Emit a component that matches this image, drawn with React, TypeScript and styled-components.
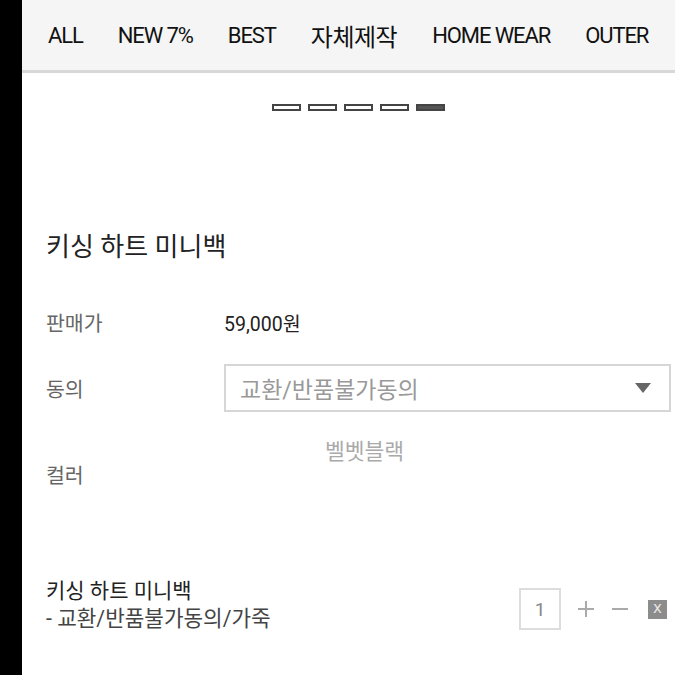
import styled, { createGlobalStyle } from "styled-components";

const GlobalStyle = createGlobalStyle`
  html, body {
    margin: 0;
    padding: 0;
    background: #fff;
    font-family: Roboto, "Noto Sans CJK KR", sans-serif;
    overflow: hidden;
  }
`;

const Shell = styled.div`
  display: flex;
  width: 675px;
  height: 675px;
`;

const SideBar = styled.div`
  width: 22px;
  flex: none;
  background: #000;
`;

const Main = styled.div`
  flex: 1;
  min-width: 0;
`;

const Nav = styled.nav`
  display: flex;
  align-items: center;
  gap: 35px;
  height: 70px;
  padding-left: 26px;
  background: #f5f5f5;
  border-bottom: 3px solid #d8d8d8;
  white-space: nowrap;
  overflow: hidden;
`;

const NavItem = styled.a<{ $ko?: boolean }>`
  font-size: ${({ $ko }) => ($ko ? 24 : 22)}px;
  letter-spacing: ${({ $ko }) => ($ko ? -0.5 : -1.1)}px;
  color: #111;
  text-decoration: none;
`;

const Dots = styled.div`
  display: flex;
  justify-content: center;
  gap: 7px;
  margin-top: 31px;
  padding-left: 20px;
`;

const Dot = styled.span<{ $active?: boolean }>`
  box-sizing: border-box;
  width: 29px;
  height: 7px;
  border: 2px solid #444;
  background: ${({ $active }) => ($active ? "#555" : "#fff")};
`;

const Product = styled.section`
  padding: 0 8px 0 24px;
`;

const Title = styled.h1`
  margin: 119px 0 34px;
  font-size: 26px;
  line-height: 34px;
  font-weight: 400;
  color: #222;
`;

const InfoRow = styled.div<{ $gap?: number }>`
  display: grid;
  grid-template-columns: 178px 1fr;
  align-items: center;
  min-height: 48px;
  margin-bottom: ${({ $gap }) => $gap ?? 0}px;
`;

const Label = styled.span`
  font-size: 20.5px;
  color: #666;
`;

const Price = styled.span`
  font-size: 19.5px;
  color: #222;
`;

const Select = styled.div`
  display: flex;
  align-items: center;
  justify-content: space-between;
  box-sizing: border-box;
  height: 48px;
  margin-right: -4px;
  padding: 0 18px 0 14px;
  border: 2px solid #d6d6d6;
  font-size: 23px;
  color: #999;
`;

const Caret = styled.span`
  width: 0;
  height: 0;
  border-left: 8px solid transparent;
  border-right: 8px solid transparent;
  border-top: 10px solid #666;
`;

const ColorRow = styled.div`
  display: grid;
  grid-template-columns: 178px 1fr;
  align-items: start;
  margin-top: 28px;
`;

const ColorLabel = styled(Label)`
  padding-top: 24px;
  line-height: 24px;
`;

const ColorValue = styled.span`
  padding-left: 101px;
  font-size: 21.5px;
  line-height: 24px;
  color: #aaa;
`;

const Item = styled.div`
  display: flex;
  align-items: flex-start;
  justify-content: space-between;
  margin-top: 89px;
`;

const ItemInfo = styled.div`
  display: flex;
  flex-direction: column;
`;

const ItemName = styled.span`
  font-size: 21px;
  line-height: 28px;
  color: #222;
`;

const ItemOption = styled.span`
  font-size: 21.3px;
  line-height: 28px;
  color: #444;
`;

const Controls = styled.div`
  display: flex;
  align-items: center;
  margin-top: 11px;
`;

const Qty = styled.div`
  box-sizing: border-box;
  width: 42px;
  height: 42px;
  display: flex;
  align-items: center;
  justify-content: center;
  border: 2px solid #ddd;
  font-size: 19px;
  color: #888;
`;

const Step = styled.button`
  display: flex;
  padding: 0;
  border: none;
  background: none;
  margin-left: 16px;
`;

const Remove = styled.button`
  display: flex;
  align-items: center;
  justify-content: center;
  width: 19px;
  height: 19px;
  margin-left: 19px;
  padding: 0 0 2px;
  border: none;
  background: #8c8c8c;
  color: #e6e6e6;
  font-family: "DejaVu Sans", sans-serif;
  font-size: 15px;
  line-height: 1;
`;

const navItems = ["ALL", "NEW 7%", "BEST", "자체제작", "HOME WEAR", "OUTER"];

export default function App() {
  return (
    <>
      <GlobalStyle />
      <Shell>
        <SideBar />
        <Main>
          <Nav>
            {navItems.map((n) => (
              <NavItem key={n} $ko={n === "자체제작"}>
                {n}
              </NavItem>
            ))}
          </Nav>
          <Dots>
            {[0, 1, 2, 3, 4].map((i) => (
              <Dot key={i} $active={i === 4} />
            ))}
          </Dots>
          <Product>
            <Title>키싱 하트 미니백</Title>
            <InfoRow $gap={18}>
              <Label>판매가</Label>
              <Price>59,000원</Price>
            </InfoRow>
            <InfoRow>
              <Label>동의</Label>
              <Select>
                <span>교환/반품불가동의</span>
                <Caret />
              </Select>
            </InfoRow>
            <ColorRow>
              <ColorLabel>컬러</ColorLabel>
              <ColorValue>벨벳블랙</ColorValue>
            </ColorRow>
            <Item>
              <ItemInfo>
                <ItemName>키싱 하트 미니백</ItemName>
                <ItemOption>- 교환/반품불가동의/가죽</ItemOption>
              </ItemInfo>
              <Controls>
                <Qty>1</Qty>
                <Step aria-label="plus">
                  <svg width="18" height="18" viewBox="0 0 18 18">
                    <path d="M9 1v16M1 9h16" stroke="#aaa" strokeWidth="2" />
                  </svg>
                </Step>
                <Step aria-label="minus">
                  <svg width="18" height="18" viewBox="0 0 18 18">
                    <path d="M1 9h16" stroke="#aaa" strokeWidth="2" />
                  </svg>
                </Step>
                <Remove aria-label="remove">x</Remove>
              </Controls>
            </Item>
          </Product>
        </Main>
      </Shell>
    </>
  );
}
